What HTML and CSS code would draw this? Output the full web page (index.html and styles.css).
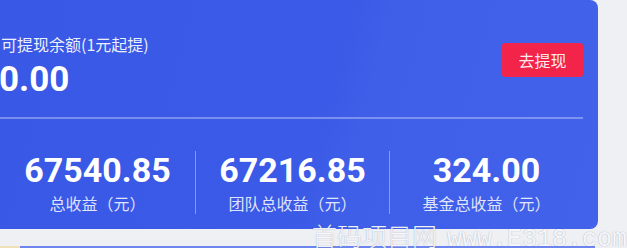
FILE: index.html
```html
<!DOCTYPE html>
<html lang="zh-CN">
<head>
<meta charset="utf-8">
<title>余额</title>
<link rel="stylesheet" href="styles.css">
</head>
<body>
<div class="page">
  <div class="card">
    <div class="top">
      <div class="balance">
        <div class="label">可提现余额(1元起提)</div>
        <div class="amount">0.00</div>
      </div>
      <button class="withdraw">去提现</button>
    </div>
    <div class="rule"></div>
    <div class="stats">
      <div class="stat">
        <div class="num">67540.85</div>
        <div class="cap">总收益（元）</div>
      </div>
      <div class="stat">
        <div class="num">67216.85</div>
        <div class="cap">团队总收益（元）</div>
      </div>
      <div class="stat">
        <div class="num">324.00</div>
        <div class="cap">基金总收益（元）</div>
      </div>
    </div>
  </div>
  <div class="next"><span class="next-a"></span><span class="next-b"></span></div>
  <div class="watermark"><span class="wm-cn">首码项目网</span><span class="wm-en">www.E318.com</span></div>
</div>
</body>
</html>
```
FILE: styles.css
```css
* { box-sizing: border-box; }
html, body { margin: 0; padding: 0; }
body {
  width: 627px;
  height: 248px;
  overflow: hidden;
  background: #eef0f4;
  font-family: "Noto Sans CJK SC", "Noto Sans", sans-serif;
}
.page {
  position: relative;
  width: 627px;
  height: 248px;
}
.card {
  width: 598px;
  height: 229px;
  padding-right: 15px;
  border-radius: 0 8px 8px 0;
  background: linear-gradient(105deg, #3958e6 0%, #3a5ae7 52%, #3f5fe9 60%, #4262ea 100%);
  color: #fff;
  display: flex;
  flex-direction: column;
}
.top {
  height: 117px;
  display: flex;
  justify-content: space-between;
  align-items: flex-start;
}
.balance {
  padding-top: 34px;
  padding-left: 1px;
}
.label {
  font-size: 16px;
  line-height: 20px;
  color: rgba(255,255,255,0.92);
}
.amount {
  margin-top: 8px;
  font-family: Roboto, "Liberation Sans", sans-serif;
  font-weight: 700;
  font-size: 35px;
  line-height: 35px;
  margin-left: -2px;
}
.withdraw {
  margin-top: 43px;
  width: 81px;
  height: 34px;
  border: 0;
  border-radius: 3px;
  background: #f22449;
  color: rgba(255,255,255,0.92);
  font-family: "Noto Sans CJK SC", sans-serif;
  font-size: 16px;
  padding: 0;
}
.rule {
  height: 2px;
  background: rgba(255,255,255,0.32);
}
.stats {
  padding-top: 32px;
  display: grid;
  grid-template-columns: 195px 194px 194px;
}
.stat {
  height: 63px;
  display: flex;
  flex-direction: column;
  align-items: center;
  border-left: 1px solid rgba(255,255,255,0.38);
}
.stat:first-child { border-left: 0; }
.num {
  margin-top: 2px;
  font-family: Roboto, "Liberation Sans", sans-serif;
  font-weight: 700;
  font-size: 34px;
  line-height: 34px;
}
.cap {
  margin-top: 6px;
  font-size: 16px;
  line-height: 20px;
  color: rgba(255,255,255,0.85);
}
.next {
  margin-top: 17px;
  height: 2px;
  display: flex;
}
.next-a { width: 20px; background: #efe0b8; }
.next-b { width: 575px; background: #6d85ee; }
.watermark {
  position: absolute;
  left: 312px;
  top: 220px;
  display: flex;
  align-items: baseline;
  gap: 10px;
  color: rgba(255,255,255,0.92);
  text-shadow: 0 0 1px rgba(90,100,140,0.6);
  white-space: nowrap;
}
.wm-cn {
  font-family: "Noto Sans CJK SC", sans-serif;
  font-weight: 300;
  font-size: 25px;
  line-height: 30px;
}
.wm-en {
  font-family: "Liberation Mono", monospace;
  font-size: 25px;
  line-height: 30px;
}
```
